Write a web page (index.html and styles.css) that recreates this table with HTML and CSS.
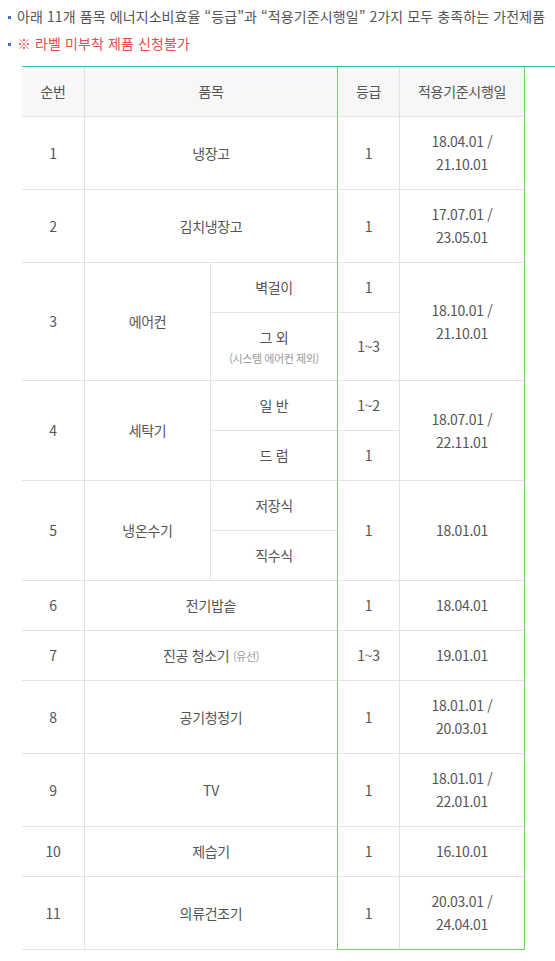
FILE: index.html
```html
<!DOCTYPE html>
<html lang="ko">
<head>
<meta charset="utf-8">
<link rel="stylesheet" href="styles.css">
</head>
<body>
<ul class="notes">
  <li>아래 11개 품목 에너지소비효율 “등급”과 “적용기준시행일” 2가지 모두 충족하는 가전제품</li>
  <li class="warn">※ 라벨 미부착 제품 신청불가</li>
</ul>
<div class="table-wrap">
<table class="items">
  <colgroup>
    <col class="c-no"><col class="c-name"><col class="c-sub"><col class="c-grade"><col class="c-date">
  </colgroup>
  <thead>
    <tr><th class="first">순번</th><th colspan="2">품목</th><th class="gl">등급</th><th class="gr">적용기준시행일</th></tr>
  </thead>
  <tbody>
    <tr><td class="first">1</td><td colspan="2">냉장고</td><td class="gl">1</td><td class="gr">18.04.01 /<br>21.10.01</td></tr>
    <tr><td class="first">2</td><td colspan="2">김치냉장고</td><td class="gl">1</td><td class="gr">17.07.01 /<br>23.05.01</td></tr>
    <tr><td class="first" rowspan="2">3</td><td rowspan="2">에어컨</td><td>벽걸이</td><td class="gl">1</td><td class="gr" rowspan="2">18.10.01 /<br>21.10.01</td></tr>
    <tr><td>그 외<span class="small block">(시스템 에어컨 제외)</span></td><td class="gl">1~3</td></tr>
    <tr><td class="first" rowspan="2">4</td><td rowspan="2">세탁기</td><td>일 반</td><td class="gl">1~2</td><td class="gr" rowspan="2">18.07.01 /<br>22.11.01</td></tr>
    <tr><td>드 럼</td><td class="gl">1</td></tr>
    <tr><td class="first" rowspan="2">5</td><td rowspan="2">냉온수기</td><td>저장식</td><td class="gl" rowspan="2">1</td><td class="gr" rowspan="2">18.01.01</td></tr>
    <tr><td>직수식</td></tr>
    <tr><td class="first">6</td><td colspan="2">전기밥솥</td><td class="gl">1</td><td class="gr">18.04.01</td></tr>
    <tr><td class="first">7</td><td colspan="2">진공 청소기 <span class="small">(유선)</span></td><td class="gl">1~3</td><td class="gr">19.01.01</td></tr>
    <tr><td class="first">8</td><td colspan="2">공기청정기</td><td class="gl">1</td><td class="gr">18.01.01 /<br>20.03.01</td></tr>
    <tr><td class="first">9</td><td colspan="2">TV</td><td class="gl">1</td><td class="gr">18.01.01 /<br>22.01.01</td></tr>
    <tr><td class="first">10</td><td colspan="2">제습기</td><td class="gl">1</td><td class="gr">16.10.01</td></tr>
    <tr class="last"><td class="first">11</td><td colspan="2">의류건조기</td><td class="gl">1</td><td class="gr">20.03.01 /<br>24.04.01</td></tr>
  </tbody>
</table>
</div>
</body>
</html>
```

FILE: styles.css
```css
html, body {
  margin: 0;
  padding: 0;
  background: #ffffff;
}
body {
  font-family: "Noto Sans CJK KR", "Noto Sans", sans-serif;
  color: #555555;
}
.notes {
  list-style: none;
  margin: 0;
  padding: 3px 0 0 0;
}
.notes li {
  position: relative;
  padding-left: 17px;
  font-size: 14px;
  line-height: 27px;
  letter-spacing: 0.1px;
  color: #555555;
  white-space: nowrap;
}
.notes li::before {
  content: "";
  position: absolute;
  left: 8px;
  top: 13px;
  width: 3px;
  height: 3px;
  background: #3c74c8;
}
.notes li.warn {
  color: #ec4b4b;
}
.table-wrap {
  margin: 9px 0 0 22px;
  border-top: 1px solid #4db6c6;
}
.items {
  width: 503px;
  border-collapse: separate;
  border-spacing: 0;
  table-layout: fixed;
  font-size: 14px;
  line-height: 23px;
  letter-spacing: -0.3px;
}
.c-no { width: 62px; }
.c-name { width: 126px; }
.c-sub { width: 127px; }
.c-grade { width: 62px; }
.c-date { width: 126px; }
.items th, .items td {
  padding: 13px 0;
  text-align: center;
  vertical-align: middle;
  font-weight: normal;
  color: #555555;
  border-bottom: 1px solid #e3e3e3;
  border-left: 1px solid #e3e3e3;
}
.items .first {
  border-left: none;
}
.items th {
  background: #f7f7f7;
}
.items .gl {
  border-left: 1px solid #74cd66;
}
.items .gr {
  border-right: 1px solid #74cd66;
}
.items tr.last .gl,
.items tr.last .gr {
  border-bottom: 1px solid #74cd66;
}
.small {
  font-size: 11px;
  line-height: 18px;
  color: #9a9a9a;
  letter-spacing: -0.4px;
}
.block {
  display: block;
}
```
